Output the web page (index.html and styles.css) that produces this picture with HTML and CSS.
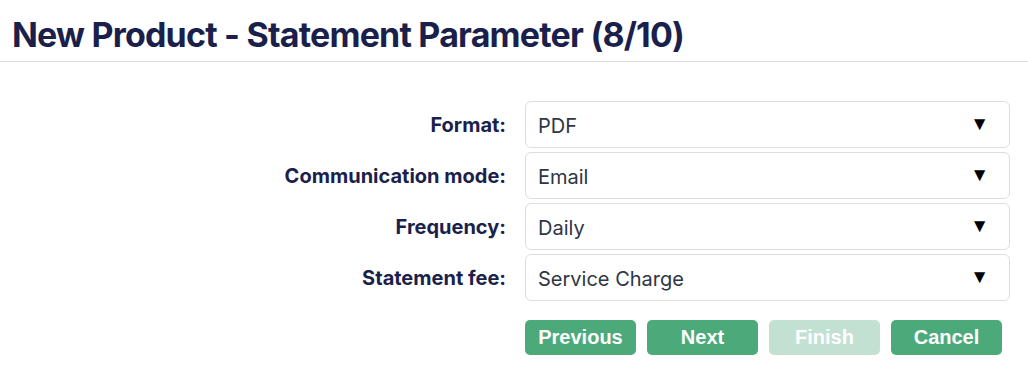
FILE: index.html
```html
<!DOCTYPE html>
<html lang="en">

<head>
    <meta charset="UTF-8">
    <meta name="viewport" content="width=device-width, initial-scale=1.0">
    <title>New Product - Statement Parameter</title>
    <link rel="stylesheet" href="styles.css">
</head>

<body>
    <header class="page-header">
        <h1>New Product - Statement Parameter (8/10)</h1>
    </header>

    <form class="wizard-form">
        <div class="form-row">
            <label for="format">Format:</label>
            <div class="select-box">
                <select id="format">
                    <option>PDF</option>
                    <option>HTML</option>
                </select>
                <span class="arrow">&#9660;</span>
            </div>
        </div>
        <div class="form-row">
            <label for="mode">Communication mode:</label>
            <div class="select-box">
                <select id="mode">
                    <option>Email</option>
                    <option>Post</option>
                </select>
                <span class="arrow">&#9660;</span>
            </div>
        </div>
        <div class="form-row">
            <label for="frequency">Frequency:</label>
            <div class="select-box">
                <select id="frequency">
                    <option>Daily</option>
                    <option>Weekly</option>
                    <option>Monthly</option>
                </select>
                <span class="arrow">&#9660;</span>
            </div>
        </div>
        <div class="form-row">
            <label for="fee">Statement fee:</label>
            <div class="select-box">
                <select id="fee">
                    <option>Service Charge</option>
                    <option>None</option>
                </select>
                <span class="arrow">&#9660;</span>
            </div>
        </div>

        <div class="button-row">
            <button type="button">Previous</button>
            <button type="button">Next</button>
            <button type="button" disabled>Finish</button>
            <button type="button">Cancel</button>
        </div>
    </form>
</body>

</html>
```

FILE: styles.css
```css
body {
    margin: 0;
    font-family: 'Liberation Sans', Arial, sans-serif;
    background-color: white;
}

.page-header {
    padding: 14px 12px 6px;
    border-bottom: 1px solid #dddddd;
}

.page-header h1 {
    margin: 0;
    font-family: Inter, sans-serif;
    font-size: 34px;
    font-weight: 700;
    line-height: 41px;
    letter-spacing: -0.8px;
    color: #1b1f4b;
}

.wizard-form {
    padding-top: 39px;
    padding-right: 18px;
}

.form-row {
    display: flex;
    align-items: center;
    justify-content: flex-end;
    gap: 19px;
    margin-bottom: 4px;
}

.form-row label {
    font-family: Inter, sans-serif;
    font-size: 20px;
    font-weight: 700;
    color: #1b1f4b;
}

.select-box {
    position: relative;
    width: 485px;
}

.select-box select {
    width: 100%;
    height: 47px;
    padding: 2px 12px 0;
    border: 1px solid #dddddd;
    border-radius: 6px;
    background-color: white;
    font-family: Inter, sans-serif;
    font-size: 20px;
    color: #2f3545;
    appearance: none;
    -webkit-appearance: none;
}

.select-box .arrow {
    position: absolute;
    right: 21px;
    top: 12px;
    font-size: 19px;
    color: black;
    pointer-events: none;
}

.button-row {
    display: flex;
    justify-content: flex-end;
    gap: 11px;
    margin-top: 19px;
    padding-right: 8px;
}

.button-row button {
    width: 111px;
    height: 35px;
    border: none;
    border-radius: 5px;
    background-color: #4caa7a;
    color: white;
    font-family: 'Liberation Sans', Arial, sans-serif;
    font-size: 20px;
    font-weight: bold;
}

.button-row button:disabled {
    background-color: #c3e1d3;
}
```
